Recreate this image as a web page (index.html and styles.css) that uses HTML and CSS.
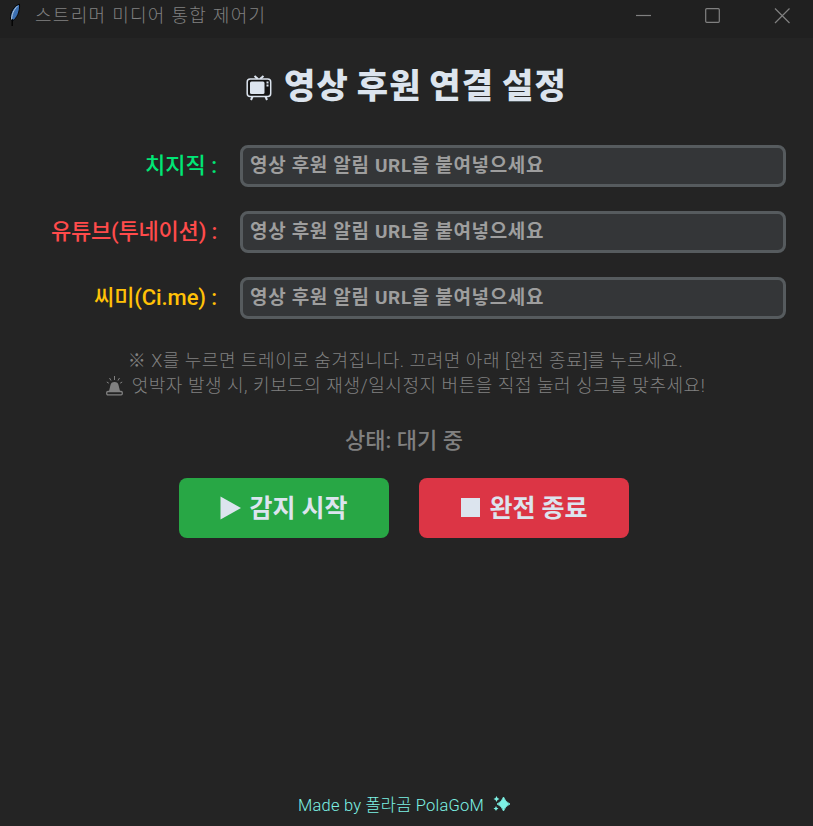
FILE: index.html
```html
<!DOCTYPE html>
<html lang="ko">
<head>
  <meta charset="UTF-8" />
  <title>스트리머 미디어 통합 제어기</title>
  <link rel="stylesheet" href="styles.css">
</head>
<body>

<header class="titlebar">
  <svg class="app-icon" width="12" height="24" viewBox="0 0 12 24">
    <path d="M10.5 1C5 3 1 9 1.5 16l2 2C8 15 11 9 10.5 1z" fill="#3b70b4" stroke="#050505"/>
    <path d="M8.500 3C4.500 7 2.500 12 2.600 17" fill="none" stroke="#b9c8d4" stroke-width="1"/>
    <path d="M3.200 16v7" stroke="#000" stroke-width="1.3"/>
  </svg>
  <span class="app-title">스트리머 미디어 통합 제어기</span>
  <div class="window-controls">
    <svg width="16" height="16" viewBox="0 0 16 16"><path d="M0 7.5h15"/></svg>
    <svg width="16" height="16" viewBox="0 0 16 16"><rect x=".7" y=".7" width="13.600" height="13.600" rx="1"/></svg>
    <svg width="16" height="16" viewBox="0 0 16 16"><path d="M1 .5l14.500 14.500M15.500 .5L1 15"/></svg>
  </div>
</header>

<main>
  <h1>
    <svg class="tv" width="26" height="26" viewBox="0 0 26 26">
      <path d="M8.500 1l3.500 3M17.500 1L14 4M6.500 21.500L5 25M19.500 21.500L21 25" fill="none" stroke="#dce4ee" stroke-width="2"/>
      <rect x="1.200" y="4" width="23.500" height="17.500" rx="3" fill="#151515" stroke="#dce4ee" stroke-width="1.500"/>
      <rect x="4" y="6.500" width="14.500" height="12.500" rx="1.500" fill="#dce4ee"/>
      <path d="M20.500 7.500h2M20.500 10.500h2" stroke="#dce4ee" stroke-width="1.800"/>
    </svg>
    <span>영상 후원 연결 설정</span>
  </h1>

  <div class="form">
    <label class="chzzk" for="chzzk-url"><span>치지직 :</span></label>
    <input type="text" id="chzzk-url" placeholder="영상 후원 알림 URL을 붙여넣으세요" />
    <label class="youtube" for="youtube-url"><span>유튜브(투네이션) :</span></label>
    <input type="text" id="youtube-url" placeholder="영상 후원 알림 URL을 붙여넣으세요" />
    <label class="cime" for="cime-url"><span>씨미(Ci.me) :</span></label>
    <input type="text" id="cime-url" placeholder="영상 후원 알림 URL을 붙여넣으세요" />
  </div>

  <div class="notice">
    <p class="notice-tray">※ X를 누르면 트레이로 숨겨집니다. 끄려면 아래 [완전 종료]를 누르세요.</p>
    <p class="notice-sync">
      <svg width="17" height="20" viewBox="0 0 17 20">
        <path d="M8.500 0v4M3.500 2l1.500 2.500M13.500 2L12 4.500M.8 6l2 1.200M16.200 6l-2 1.200" stroke="#808080" fill="none"/>
        <path d="M3 15l1.500-6q.5-3 4-3t4 3l1.500 6z" fill="#808080"/>
        <rect x=".7" y="15.500" width="15.600" height="3.300" rx="1.200" fill="#242424" stroke="#808080" stroke-width="1.300"/>
      </svg>
      <span>엇박자 발생 시, 키보드의 재생/일시정지 버튼을 직접 눌러 싱크를 맞추세요!</span>
    </p>
  </div>

  <p class="status">상태: 대기 중</p>

  <div class="buttons">
    <button class="btn btn-start">
      <svg width="21" height="24" viewBox="0 0 21 24"><path d="M.5 .5l20.500 11.500L.5 23.500z"/></svg>
      <span>감지 시작</span>
    </button>
    <button class="btn btn-stop">
      <svg width="21" height="24" viewBox="0 0 21 24"><path d="M1 2h19v19H1z"/></svg>
      <span>완전 종료</span>
    </button>
  </div>
</main>

<footer>
  <span>Made by 폴라곰 PolaGoM</span>
  <svg width="17" height="16" viewBox="0 0 17 16">
    <path d="M10.500 1q1.800 5.200 6.500 7-4.700 1.800-6.500 7-1.800-5.200-6.500-7 4.700-1.800 6.500-7z" stroke="#7df2e5" stroke-width=".8"/>
    <path d="M3.500 0q.5 2.500 3 3-2.500.5-3 3-.5-2.500-3-3 2.500-.5 3-3zM3 10q.4 2 2.500 2.500Q3.400 13 3 15q-.4-2-2.500-2.500Q2.600 12 3 10z"/>
  </svg>
</footer>

</body>
</html>
```

FILE: styles.css
```css
* {
  margin: 0;
  padding: 0;
  box-sizing: border-box;
}
body {
  height: 826px;
  display: flex;
  flex-direction: column;
  overflow: hidden;
  background: #242424;
  color: #dce4ee;
  font-family: Roboto, "Noto Sans CJK KR", sans-serif;
}
span, p {
  white-space: nowrap;
}
.titlebar {
  height: 38px;
  flex: none;
  display: flex;
  align-items: flex-start;
  padding: 3px 23px 0 9px;
  background: #202020;
  color: #808080;
}
.app-title {
  margin-left: 14px;
  font-size: 18px;
  line-height: 26px;
  font-weight: 300;
  letter-spacing: 1.3px;
}
.window-controls {
  display: flex;
  gap: 53px;
  margin: 5px 0 0 auto;
}
.window-controls svg {
  fill: none;
  stroke: #808080;
  stroke-width: 1.2;
}
main {
  flex: 1;
}
h1 {
  display: flex;
  justify-content: center;
  align-items: center;
  gap: 12px;
  height: 50px;
  margin-top: 22px;
  font-size: 34px;
  line-height: 50px;
  font-weight: 900;
  letter-spacing: 1.2px;
  word-spacing: -2px;
}
h1 span {
  margin-top: 2px;
}
.tv {
  margin-top: 5px;
}
.form {
  display: grid;
  grid-template-columns: 217px 546px;
  grid-auto-rows: 42px;
  gap: 24px 23px;
  margin-top: 35px;
}
label {
  display: flex;
  justify-content: flex-end;
  align-items: center;
  font-size: 22px;
  line-height: 30px;
  font-weight: 500;
}
.chzzk {
  color: #00e676;
}
.youtube {
  color: #ff4b4b;
  letter-spacing: -0.2px;
}
.cime {
  color: #ffc107;
  letter-spacing: -0.1px;
}
input {
  height: 42px;
  border: 3px solid #565b5e;
  border-radius: 8px;
  padding: 0 7px 2px;
  background: #343638;
  color: #dce4ee;
  font-family: inherit;
  font-size: 19px;
  font-weight: 700;
  letter-spacing: 0.65px;
}
input::placeholder {
  color: #9e9e9e;
}
.notice {
  margin-top: 29px;
  color: #808080;
  font-size: 18px;
  line-height: 25px;
  font-weight: 300;
  letter-spacing: 0.54px;
}
.notice p {
  display: flex;
  justify-content: center;
  align-items: center;
  gap: 9px;
  height: 25px;
  padding-right: 2px;
}
.notice svg {
  margin-top: 1px;
}
.status {
  margin: 27px 5px 0 0;
  text-align: center;
  color: #808080;
  font-size: 22px;
  line-height: 32px;
  font-weight: 500;
}
.buttons {
  display: flex;
  justify-content: center;
  gap: 30px;
  margin: 21px 5px 0 0;
}
.btn {
  width: 210px;
  height: 60px;
  display: flex;
  justify-content: center;
  align-items: center;
  gap: 8px;
  border: none;
  border-radius: 8px;
  color: #dce4ee;
  font-family: inherit;
  font-size: 25px;
  line-height: 36px;
  font-weight: 700;
}
.btn span {
  margin-top: 2px;
}
.btn svg {
  fill: #dce4ee;
}
.btn-start {
  background: #28a745;
}
.btn-stop {
  background: #dc3545;
}
footer {
  height: 44px;
  display: flex;
  justify-content: center;
  align-items: center;
  gap: 9px;
  padding-right: 5px;
  color: #7df2e5;
  font-size: 16.5px;
  font-weight: 300;
  letter-spacing: 0.2px;
}
footer svg {
  fill: #7df2e5;
}
```
